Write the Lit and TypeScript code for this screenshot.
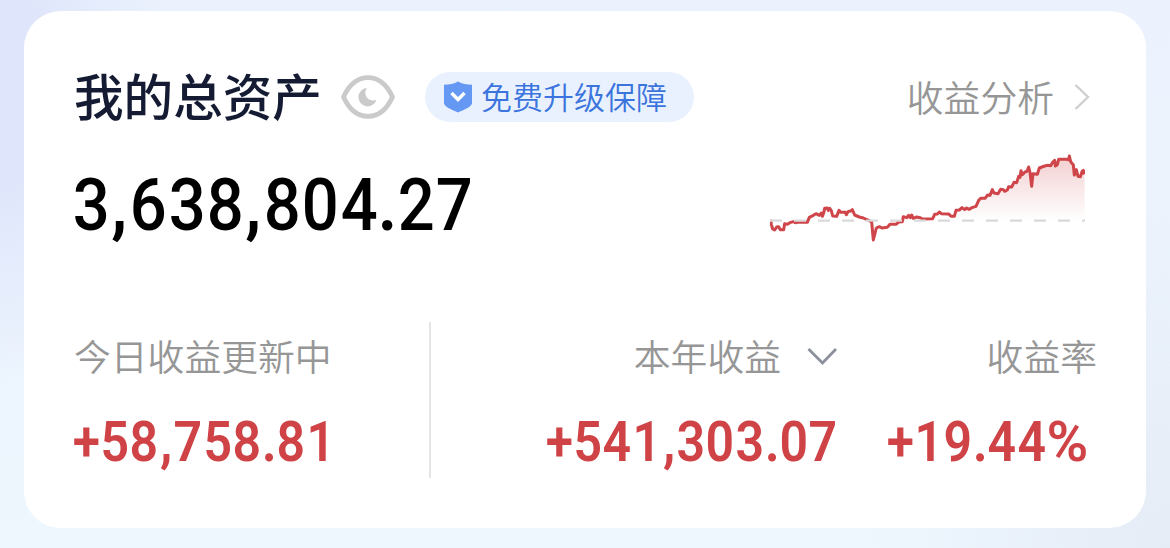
import { LitElement, html, css } from "lit";
import { customElement, property } from "lit/decorators.js";

// [x, y] samples of the yearly profit curve, baseline at y = 227
const TREND: number[][] = [
  [2, 224], [4, 238], [8, 252], [14, 255], [20, 246], [26, 245], [31, 254], [41, 254],
  [44, 236], [52, 238], [60, 233], [70, 230], [76, 233], [86, 231], [112, 232], [118, 217],
  [130, 211], [138, 206], [148, 211], [154, 204], [157, 214], [161, 204], [164, 190], [172, 189],
  [175, 196], [179, 190], [184, 197], [188, 213], [200, 214], [207, 196], [212, 202], [226, 202],
  [229, 209], [234, 200], [242, 198], [247, 194], [254, 210], [268, 216], [280, 219], [296, 226],
  [305, 231], [310, 285], [319, 249], [328, 245], [336, 249], [352, 247], [360, 238], [378, 238],
  [386, 231], [397, 230], [400, 215], [410, 218], [416, 211], [421, 218], [425, 210], [430, 220],
  [440, 216], [450, 218], [458, 222], [488, 221], [494, 208], [502, 207], [508, 201], [514, 206],
  [536, 207], [544, 214], [553, 214], [558, 196], [568, 195], [576, 188], [584, 194], [590, 189],
  [597, 193], [606, 188], [618, 184], [626, 166], [632, 160], [645, 160], [653, 150], [660, 151],
  [667, 134], [672, 144], [684, 146], [692, 133], [700, 134], [704, 139], [712, 135], [716, 125],
  [725, 126], [732, 112], [740, 113], [746, 94], [750, 97], [753, 77], [757, 89], [765, 81],
  [771, 79], [776, 66], [780, 82], [785, 124], [789, 86], [802, 88], [808, 69], [824, 63],
  [834, 61], [842, 62], [848, 52], [854, 46], [856, 63], [862, 59], [866, 43], [890, 43],
  [896, 44], [898, 33], [902, 50], [910, 60], [913, 90], [919, 74], [924, 94], [931, 95],
  [936, 80], [940, 76], [943, 88],
];

const CELL: Record<string, string> = { ",": "point", ".": "point", "+": "plus", "%": "percent" };

@customElement("money-text")
export class MoneyText extends LitElement {
  @property() value = "";

  static styles = css`
    :host {
      display: flex;
      font-family: Roboto, "Liberation Sans", sans-serif;
      font-weight: 500;
      line-height: 1;
      white-space: nowrap;
    }

    span {
      display: flex;
      justify-content: center;
      width: 0.537em;
      transform: scaleX(0.91);
    }

    .point {
      width: 0.262em;
      font-weight: 700;
    }

    .plus {
      width: 0.49em;
      transform: scaleX(0.9);
    }

    .percent {
      width: 0.78em;
      transform: scaleX(1.03);
    }
  `;

  render() {
    return html`${[...this.value].map(
      (c) => html`<span class="${CELL[c] ?? "digit"}">${c}</span>`
    )}`;
  }
}

@customElement("trend-chart")
export class TrendChart extends LitElement {
  static styles = css`
    svg {
      display: block;
      width: 315px;
      height: 100px;
    }

    .line {
      fill: none;
      stroke: #cf4549;
      stroke-width: 9;
      stroke-linejoin: round;
    }

    .base {
      stroke: #d9d9d9;
      stroke-width: 7;
      stroke-dasharray: 36 36;
    }
  `;

  render() {
    const points = TREND.map((p) => p.join(",")).join(" ");
    return html`
      <svg viewBox="0 0 945 300">
        <defs>
          <linearGradient id="fade" gradientUnits="userSpaceOnUse" x1="0" y1="40" x2="0" y2="227">
            <stop offset="0" stop-color="#cf4549" stop-opacity="0.25" />
            <stop offset="1" stop-color="#cf4549" stop-opacity="0" />
          </linearGradient>
          <clipPath id="above"><rect width="945" height="227" /></clipPath>
        </defs>
        <polygon points="0,227 ${points} 945,227" fill="url(#fade)" clip-path="url(#above)" />
        <polyline class="line" points="${points}" />
        <line class="base" x1="0" y1="227" x2="945" y2="227" />
      </svg>
    `;
  }
}

@customElement("app-root")
export class AppRoot extends LitElement {
  static styles = css`
    :host {
      display: block;
      box-sizing: border-box;
      width: 1170px;
      height: 548px;
      padding: 11px 24px 20px;
      background:
        radial-gradient(170px 300px at 0 90px, #dfe6fb 30%, rgba(223, 230, 251, 0)),
        radial-gradient(300px 400px at 100% 100%, #e5ecf6, rgba(229, 236, 246, 0)),
        linear-gradient(180deg, #ebf2fd, #eef6fe);
      font-family: "Noto Sans CJK SC", sans-serif;
      overflow: hidden;
    }

    .card {
      box-sizing: border-box;
      height: 517px;
      padding: 61px 49px 0 50px;
      border-radius: 37px;
      background: #fff;
    }

    .header,
    .badge,
    .more,
    .total,
    .stats,
    .label {
      display: flex;
      align-items: center;
    }

    .header {
      height: 50px;
    }

    .title {
      padding-bottom: 7px;
      font-size: 49.6px;
      font-weight: 500;
      line-height: 50px;
      color: #141b33;
    }

    .eye {
      width: 54px;
      height: 46px;
      margin-left: 19px;
    }

    .badge {
      box-sizing: border-box;
      width: 269px;
      height: 50px;
      margin-left: 30px;
      padding-left: 18px;
      border-radius: 25px;
      background: #e8f1fd;
      color: #3b74dd;
      font-size: 31px;
      font-weight: 350;
      line-height: 48px;
      gap: 8px;
    }

    .badge span {
      padding-bottom: 2px;
    }

    .shield {
      width: 30px;
      height: 32px;
    }

    .more {
      margin-left: auto;
      margin-right: 7px;
      gap: 20px;
    }

    .more span {
      padding-bottom: 3px;
    }

    .more,
    .label {
      font-size: 36.8px;
      font-weight: 350;
      line-height: 50px;
      color: #969696;
    }

    .next {
      width: 16px;
      height: 28px;
    }

    .total {
      height: 100px;
      margin-top: 23px;
      padding-right: 12px;
      justify-content: space-between;
    }

    .total money-text {
      margin-left: -2px;
      padding-top: 22px;
      font-size: 71.5px;
      color: #000;
    }

    .stats {
      height: 156px;
      margin-top: 77px;
      align-items: stretch;
    }

    .stat {
      display: flex;
      flex-direction: column;
      padding-top: 8px;
      gap: 35px;
    }

    .stat money-text {
      font-size: 55px;
      font-weight: 600;
      color: #cf4347;
    }

    .today {
      width: 355px;
      border-right: 2px solid #e5e5e5;
    }

    .today money-text {
      margin-left: -1px;
    }

    .year {
      width: 407px;
      align-items: flex-end;
    }

    .year .label {
      gap: 25px;
    }

    .rate {
      flex: 1;
      align-items: flex-end;
    }

    .rate money-text {
      margin-right: 8px;
    }

    .down {
      width: 32px;
      height: 20px;
      padding-top: 2px;
    }
  `;

  render() {
    return html`
      <div class="card">
        <div class="header">
          <div class="title">我的总资产</div>
          <svg class="eye" viewBox="0 0 54 46" fill="none">
            <path
              d="M2.500 23C8 11 16.500 3.700 27 3.700S46 11 51.500 23C46 35 37.500 42.300 27 42.300S8 35 2.500 23Z"
              stroke="#cacaca"
              stroke-width="4.800"
              stroke-linejoin="round"
            />
            <path d="M26 14A9.200 9.200 0 1 0 35.500 25.500A7.600 7.600 0 0 1 26 14Z" fill="#cacaca" />
          </svg>
          <div class="badge">
            <svg class="shield" viewBox="0 0 30 32" fill="none">
              <path
                d="M15 .5C19 2.700 23.500 3.600 29 3.800V22C29 25.500 22 28.500 15 31.500C8 28.500 1 25.500 1 22V3.800C6.500 3.600 11 2.700 15 .5Z"
                fill="#6598f3"
              />
              <path d="M8.500 12L15 18.500L21.500 12" stroke="#fff" stroke-width="3.400" />
            </svg>
            <span>免费升级保障</span>
          </div>
          <div class="more">
            <span>收益分析</span>
            <svg class="next" viewBox="0 0 16 28" fill="none">
              <path d="M1.500 2L14 14L1.500 26" stroke="#cfcfcf" stroke-width="2.400" />
            </svg>
          </div>
        </div>

        <div class="total">
          <money-text value="3,638,804.27"></money-text>
          <trend-chart></trend-chart>
        </div>

        <div class="stats">
          <div class="stat today">
            <div class="label">今日收益更新中</div>
            <money-text value="+58,758.81"></money-text>
          </div>
          <div class="stat year">
            <div class="label">
              <span>本年收益</span>
              <svg class="down" viewBox="0 0 32 20" fill="none">
                <path d="M2.500 3L16.500 17L30 3" stroke="#8c909c" stroke-width="2.800" />
              </svg>
            </div>
            <money-text value="+541,303.07"></money-text>
          </div>
          <div class="stat rate">
            <div class="label">收益率</div>
            <money-text value="+19.44%"></money-text>
          </div>
        </div>
      </div>
    `;
  }
}
